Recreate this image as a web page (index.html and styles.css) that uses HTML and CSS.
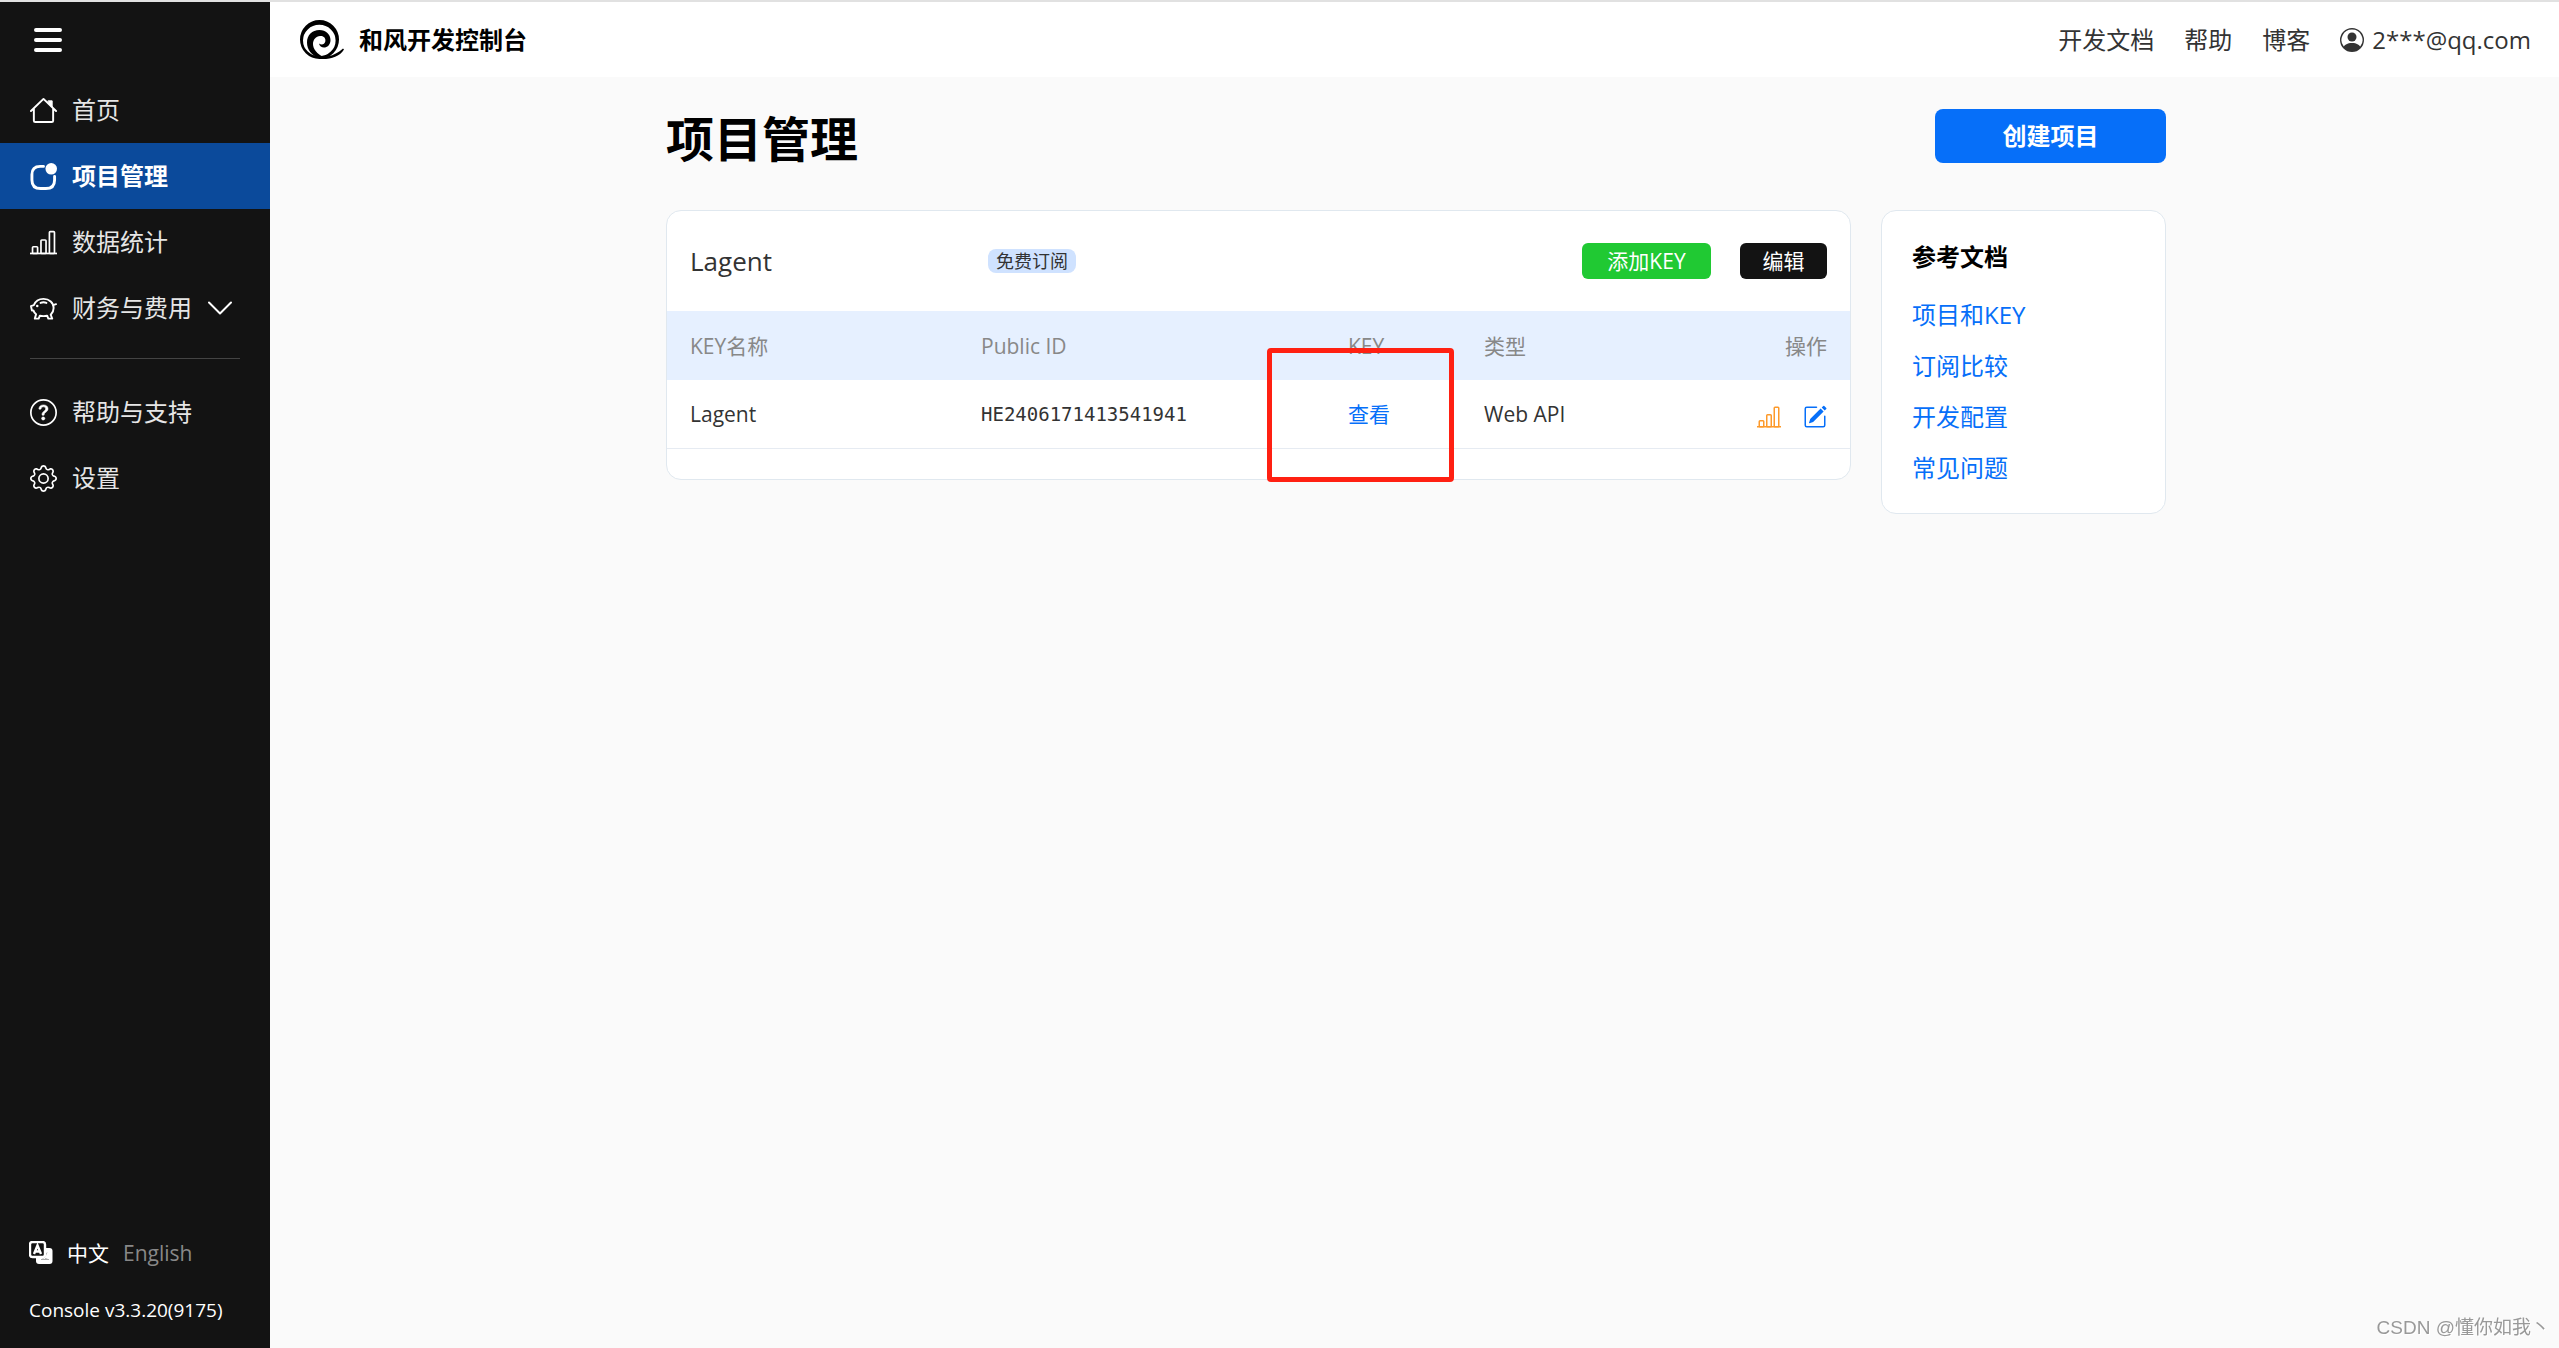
FILE: index.html
```html
<!DOCTYPE html>
<html lang="zh-CN">
<head>
<meta charset="utf-8">
<meta name="viewport" content="width=device-width, initial-scale=1">
<title>项目管理 - 和风开发控制台</title>
<link rel="stylesheet" href="styles.css">
</head>
<body>
<div class="app">
  <aside class="sidebar">
    <button class="menu-toggle" type="button" aria-label="菜单">
      <svg class="menu-icon" viewBox="0 0 28 26" fill="none" stroke="currentColor" stroke-width="4" stroke-linecap="round"><path d="M2 3H26M2 13H26M2 23H26"/></svg>
    </button>
    <nav class="side-nav">
      <a class="nav-item" href="#">
        <svg class="nav-icon" viewBox="0 0 28 28" fill="none" stroke="currentColor" stroke-width="2" stroke-linecap="round" stroke-linejoin="round"><path d="M1 14.500L14 2L27 14.500M4 12V24.500Q4 26 5.500 26H22.500Q24 26 24 24.500V12"/><path d="M19 4H23V10.500L19 6.500Z" fill="currentColor" stroke-width="1"/></svg>
        <span>首页</span>
      </a>
      <a class="nav-item nav-item-active" href="#" aria-current="page">
        <svg class="nav-icon" viewBox="0 0 28 28"><path d="M14 3.500H10.500Q2 3.500 2 12V17.500Q2 26.500 11 26.500H16.500Q25.500 26.500 25.500 17.500V14" fill="none" stroke="currentColor" stroke-width="3" stroke-linecap="round"/><circle cx="22" cy="6" r="6" fill="currentColor"/></svg>
        <span>项目管理</span>
      </a>
      <a class="nav-item" href="#">
        <svg class="nav-icon" viewBox="0 0 16 16" fill="currentColor"><path d="M4 11H2v3h2v-3zm5-4H7v7h2V7zm5-5v12h-2V2h2zm-2-1a1 1 0 0 0-1 1v12a1 1 0 0 0 1 1h2a1 1 0 0 0 1-1V2a1 1 0 0 0-1-1h-2zM6 7a1 1 0 0 1 1-1h2a1 1 0 0 1 1 1v7a1 1 0 0 1-1 1H7a1 1 0 0 1-1-1V7zm-5 4a1 1 0 0 1 1-1h2a1 1 0 0 1 1 1v3a1 1 0 0 1-1 1H2a1 1 0 0 1-1-1v-3z"/><path d="M0 14h16v1H0z"/></svg>
        <span>数据统计</span>
      </a>
      <a class="nav-item" href="#">
        <svg class="nav-icon" viewBox="0 0 28 28" fill="none" stroke="currentColor" stroke-width="2" stroke-linecap="round" stroke-linejoin="round"><path d="M1 11.500L4 10.500C5.500 6.500 9.500 4 14 4C20 4 24.500 8 24.500 13.500C24.500 16.500 23.500 18.500 21.500 20.500L23 24.500H19L17.800 21.500C15.500 22 12.500 22 10.200 21.500L9 24.500H5L6.300 20C5 19 4 17.500 3.500 16H2Z"/><path d="M24 10.500L27 9.500M11 8.200Q14 7 17 8.200"/><circle cx="7.500" cy="11.500" r="1.300" fill="currentColor" stroke="none"/></svg>
        <span>财务与费用</span>
        <svg class="chevron" viewBox="0 0 24 14" fill="none" stroke="currentColor" stroke-width="2" stroke-linecap="round" stroke-linejoin="round"><path d="M1 1.500L12 12.500L23 1.500"/></svg>
      </a>
    </nav>
    <hr class="divider">
    <nav class="side-nav">
      <a class="nav-item" href="#">
        <svg class="nav-icon" viewBox="0 0 16 16" fill="currentColor"><path d="M8 15A7 7 0 1 1 8 1a7 7 0 0 1 0 14zm0 1A8 8 0 1 0 8 0a8 8 0 0 0 0 16z"/><path stroke="currentColor" stroke-width=".3" d="M5.255 5.786a.237.237 0 0 0 .241.247h.825c.138 0 .248-.113.266-.25.090-.656.540-1.134 1.342-1.134.686 0 1.314.343 1.314 1.168 0 .635-.374.927-.965 1.371-.673.489-1.206 1.060-1.168 1.987l.003.217a.25.25 0 0 0 .25.246h.811a.25.25 0 0 0 .25-.25v-.105c0-.718.273-.927 1.010-1.486.609-.463 1.244-.977 1.244-2.056 0-1.511-1.276-2.241-2.673-2.241-1.267 0-2.655.590-2.750 2.286zm1.557 5.763c0 .533.425.927 1.010.927.609 0 1.028-.394 1.028-.927 0-.552-.420-.940-1.029-.940-.584 0-1.009.388-1.009.940z"/></svg>
        <span>帮助与支持</span>
      </a>
      <a class="nav-item" href="#">
        <svg class="nav-icon" viewBox="0 0 16 16" fill="currentColor"><path d="M8 4.754a3.246 3.246 0 1 0 0 6.492 3.246 3.246 0 0 0 0-6.492zM5.754 8a2.246 2.246 0 1 1 4.492 0 2.246 2.246 0 0 1-4.492 0z"/><path d="M9.796 1.343c-.527-1.790-3.065-1.790-3.592 0l-.094.319a.873.873 0 0 1-1.255.520l-.292-.160c-1.640-.892-3.433.902-2.540 2.541l.159.292a.873.873 0 0 1-.520 1.255l-.319.094c-1.790.527-1.790 3.065 0 3.592l.319.094a.873.873 0 0 1 .520 1.255l-.160.292c-.892 1.640.901 3.434 2.541 2.540l.292-.159a.873.873 0 0 1 1.255.520l.094.319c.527 1.790 3.065 1.790 3.592 0l.094-.319a.873.873 0 0 1 1.255-.520l.292.160c1.640.893 3.434-.902 2.540-2.541l-.159-.292a.873.873 0 0 1 .520-1.255l.319-.094c1.790-.527 1.790-3.065 0-3.592l-.319-.094a.873.873 0 0 1-.520-1.255l.160-.292c.893-1.640-.902-3.433-2.541-2.540l-.292.159a.873.873 0 0 1-1.255-.520l-.094-.319zm-2.633.283c.246-.835 1.428-.835 1.674 0l.094.319a1.873 1.873 0 0 0 2.693 1.115l.291-.160c.764-.415 1.600.420 1.184 1.185l-.159.292a1.873 1.873 0 0 0 1.116 2.692l.318.094c.835.246.835 1.428 0 1.674l-.319.094a1.873 1.873 0 0 0-1.115 2.693l.160.291c.415.764-.420 1.600-1.185 1.184l-.291-.159a1.873 1.873 0 0 0-2.693 1.116l-.094.318c-.246.835-1.428.835-1.674 0l-.094-.319a1.873 1.873 0 0 0-2.692-1.115l-.292.160c-.764.415-1.600-.420-1.184-1.185l.159-.291A1.873 1.873 0 0 0 1.945 8.930l-.319-.094c-.835-.246-.835-1.428 0-1.674l.319-.094A1.873 1.873 0 0 0 3.060 4.377l-.160-.292c-.415-.764.420-1.600 1.185-1.184l.292.159a1.873 1.873 0 0 0 2.692-1.115l.094-.319z"/></svg>
        <span>设置</span>
      </a>
    </nav>
    <div class="side-footer">
      <div class="languages">
        <svg class="lang-icon" viewBox="0 0 24 24"><rect x="7" y="7" width="16.500" height="16" rx="3" fill="#fff"/><path d="M12 18.500h8M18 11.500q-1 4-5 7M14 15q2 3 5 3.500" fill="none" stroke="#aaa" stroke-width="1"/><rect x="1" y="1" width="15" height="15" rx="2.500" fill="#131313" stroke="#fff" stroke-width="2.400"/><path d="M5 13L8.500 4.500L12 13M6.500 10.500H10.500" fill="none" stroke="#fff" stroke-width="2.400"/></svg>
        <a class="lang lang-current" href="#">中文</a>
        <a class="lang" href="#">English</a>
      </div>
      <p class="version">Console v3.3.20(9175)</p>
    </div>
  </aside>

  <div class="page">
    <header class="topbar">
      <a class="brand" href="#">
        <svg class="logo" viewBox="0 0 44 40" fill="#000">
          <path fill-rule="evenodd" d="M0 19.500a19.500 19.500 0 1 0 39 0a19.500 19.500 0 1 0-39 0zM3 20.500a16.300 15.700 0 1 0 32.600 0a16.300 15.700 0 1 0-32.600 0z"/>
          <path d="M20 36.500C31 37.500 38 33 43 28.500L44 29.500C39 37 31 39.500 20 39z"/>
          <path d="M18 38C12 35 7 30 7 22.500C7 15 12 10 19.500 10C26 10 30.500 14.500 30.500 20C30.500 25 27 27.500 24 27.500C21.500 27.500 19.500 26 19 23.500C21 25 24.500 25 25.300 21.500C26 18 23.500 15.500 20 16C16 16.500 13 19.500 13 24C13 29 17 34 24 37.500Z"/>
        </svg>
        <span class="brand-name">和风开发控制台</span>
      </a>
      <nav class="top-nav">
        <a class="top-link" href="#">开发文档</a>
        <a class="top-link" href="#">帮助</a>
        <a class="top-link" href="#">博客</a>
        <a class="top-link account" href="#">
          <svg class="account-icon" viewBox="0 0 16 16" fill="currentColor"><path d="M11 6a3 3 0 1 1-6 0 3 3 0 0 1 6 0z"/><path fill-rule="evenodd" d="M0 8a8 8 0 1 1 16 0A8 8 0 0 1 0 8zm8-7a7 7 0 0 0-5.468 11.370C3.242 11.226 4.805 10 8 10s4.757 1.225 5.468 2.370A7 7 0 0 0 8 1z"/></svg>
          <span>2***@qq.com</span>
        </a>
      </nav>
    </header>

    <main class="main">
      <div class="container">
        <div class="page-head">
          <h1 class="page-title">项目管理</h1>
          <button class="btn btn-create" type="button">创建项目</button>
        </div>
        <div class="columns">
          <section class="card project">
            <div class="project-head">
              <h2 class="project-name">Lagent</h2>
              <span class="badge">免费订阅</span>
              <div class="project-actions">
                <button class="btn btn-add" type="button">添加KEY</button>
                <button class="btn btn-edit" type="button">编辑</button>
              </div>
            </div>
            <table class="keys">
              <colgroup><col class="col-name"><col class="col-id"><col class="col-key"><col class="col-type"><col></colgroup>
              <thead>
                <tr><th>KEY名称</th><th>Public ID</th><th>KEY</th><th>类型</th><th class="ops-head">操作</th></tr>
              </thead>
              <tbody>
                <tr>
                  <td>Lagent</td>
                  <td class="mono">HE2406171413541941</td>
                  <td><a class="link" href="#">查看</a></td>
                  <td>Web API</td>
                  <td>
                    <div class="ops">
                      <a class="op op-stats" href="#" aria-label="统计"><svg class="op-icon" viewBox="0 0 16 16" fill="currentColor"><path d="M4 11H2v3h2v-3zm5-4H7v7h2V7zm5-5v12h-2V2h2zm-2-1a1 1 0 0 0-1 1v12a1 1 0 0 0 1 1h2a1 1 0 0 0 1-1V2a1 1 0 0 0-1-1h-2zM6 7a1 1 0 0 1 1-1h2a1 1 0 0 1 1 1v7a1 1 0 0 1-1 1H7a1 1 0 0 1-1-1V7zm-5 4a1 1 0 0 1 1-1h2a1 1 0 0 1 1 1v3a1 1 0 0 1-1 1H2a1 1 0 0 1-1-1v-3z"/><path d="M0 14h16v1H0z"/></svg></a>
                      <a class="op op-edit" href="#" aria-label="编辑"><svg class="op-icon" viewBox="0 0 16 16" fill="currentColor"><path d="M15.502 1.940a.5.5 0 0 1 0 .706L14.459 3.690l-2-2L13.502.646a.5.5 0 0 1 .707 0l1.293 1.293zm-1.750 2.456-2-2L4.939 9.210a.5.5 0 0 0-.121.196l-.805 2.414a.25.25 0 0 0 .316.316l2.414-.805a.5.5 0 0 0 .196-.120l6.813-6.814z"/><path d="M1 13.500A1.500 1.500 0 0 0 2.500 15h11a1.500 1.500 0 0 0 1.500-1.500v-6a.5.5 0 0 0-1 0v6a.5.5 0 0 1-.5.5h-11a.5.5 0 0 1-.5-.5v-11a.5.5 0 0 1 .5-.5H9a.5.5 0 0 0 0-1H2.500A1.500 1.500 0 0 0 1 2.500v11z"/></svg></a>
                    </div>
                  </td>
                </tr>
              </tbody>
            </table>
            <span class="highlight" aria-hidden="true"></span>
          </section>
          <aside class="card docs">
            <h2 class="docs-title">参考文档</h2>
            <a class="doc-link" href="#">项目和KEY</a>
            <a class="doc-link" href="#">订阅比较</a>
            <a class="doc-link" href="#">开发配置</a>
            <a class="doc-link" href="#">常见问题</a>
          </aside>
        </div>
      </div>
    </main>
  </div>
</div>
<div class="watermark">CSDN @懂你如我丶</div>
</body>
</html>
```
FILE: styles.css
```css
* { box-sizing: border-box; }

body {
  margin: 0;
  border-top: 2px solid #e1e1e1;
  background: #fafafa;
  color: #333;
  font-family: "Open Sans", "Noto Sans CJK SC", sans-serif;
  font-size: 21px;
  line-height: 30px;
}

a { color: inherit; text-decoration: none; }
h1, h2, p { margin: 0; }
svg { display: block; flex: none; }
button { font-family: inherit; cursor: pointer; }

.app { display: flex; min-height: calc(100vh - 2px); }

/* Sidebar */
.sidebar {
  display: flex;
  flex-direction: column;
  flex: none;
  width: 270px;
  background: #131313;
  color: #fff;
}
.menu-toggle {
  display: flex;
  align-items: center;
  height: 75px;
  padding: 0 34px;
  border: 0;
  background: none;
  color: #fff;
}
.menu-icon { width: 28px; height: 26px; }
.nav-item {
  display: flex;
  align-items: center;
  height: 66px;
  padding: 0 30px;
  color: #e6e6e6;
  font-size: 24px;
}
.nav-item-active { background: #0b4a9b; color: #fff; font-weight: 700; }
.nav-icon { width: 27px; height: 27px; margin-right: 15px; color: #fff; }
.chevron { width: 24px; height: 14px; margin-left: 16px; color: #fff; }
.divider {
  width: 210px;
  height: 1px;
  margin: 17px 30px 20px;
  border: 0;
  background: #444;
}
.side-footer { margin-top: auto; padding: 0 29px 23px; }
.languages { display: flex; align-items: center; gap: 14px; margin-bottom: 27px; }
.lang-icon { width: 24px; height: 24px; }
.lang { color: #888; }
.lang-current { color: #fff; }
.version { font-size: 19px; }

/* Top bar */
.page { flex: 1; min-width: 0; }
.topbar {
  display: flex;
  align-items: center;
  justify-content: space-between;
  height: 75px;
  padding: 0 28px 0 30px;
  background: #fff;
}
.brand { display: flex; align-items: center; gap: 15px; color: #000; }
.logo { width: 44px; height: 40px; }
.brand-name { font-size: 24px; font-weight: 700; }
.top-nav { display: flex; gap: 30px; font-size: 24px; }
.account { display: flex; align-items: center; gap: 8px; }
.account-icon { width: 24px; height: 24px; }

/* Content */
.main { padding: 32px 24px 32px 27px; }
.container { max-width: 1500px; margin: 0 auto; }
.page-head {
  display: flex;
  align-items: flex-start;
  justify-content: space-between;
  margin-bottom: 41px;
}
.page-title { color: #000; font-size: 48px; line-height: 60px; }
.btn {
  padding: 0;
  border: 0;
  border-radius: 6px;
  color: #fff;
  font-size: 21px;
  line-height: 30px;
}
.btn-create {
  width: 231px;
  height: 54px;
  border-radius: 8px;
  background: #066ff9;
  font-size: 24px;
  font-weight: 700;
}
.btn-add { width: 129px; height: 36px; background: #20c933; }
.btn-edit { width: 87px; height: 36px; background: #131313; }

.columns { display: flex; align-items: flex-start; gap: 30px; }
.card { border: 1px solid #e0e8ef; border-radius: 15px; background: #fff; }
.project { position: relative; flex: 1; padding-bottom: 30px; }
.project-head { display: flex; align-items: center; height: 100px; padding: 0 23px; }
.project-name { width: 298px; color: #333; font-size: 26px; font-weight: 500; }
.badge {
  padding: 0 8px;
  border-radius: 8px;
  background: #cfe2ff;
  font-size: 18px;
  line-height: 24px;
}
.project-actions { display: flex; gap: 29px; margin-left: auto; }

.keys { width: 100%; border-spacing: 0; table-layout: fixed; }
.col-name { width: 291px; }
.col-id { width: 367px; }
.col-key { width: 136px; }
.col-type { width: 195px; }
.keys th, .keys td { height: 69px; padding: 0 23px; text-align: left; white-space: nowrap; }
.keys th { background: #e6f0ff; color: #888; font-weight: 400; }
.keys td { border-bottom: 1px solid #e6ebf2; }
.keys .ops-head { text-align: right; }
.keys .mono { font-family: "DejaVu Sans Mono", monospace; font-size: 19px; }
.link, .doc-link { color: #066ff9; }
.ops { display: flex; justify-content: flex-end; gap: 22px; padding-top: 5px; }
.op-icon { width: 24px; height: 24px; }
.op-stats { color: #fd9a2b; }
.op-edit { color: #066ff9; }

.highlight {
  position: absolute;
  top: 137px;
  left: 600px;
  width: 187px;
  height: 134px;
  border: 5px solid #ff2012;
  border-radius: 4px;
  pointer-events: none;
}

.docs {
  display: flex;
  flex-direction: column;
  gap: 21px;
  width: 285px;
  padding: 31px 30px 30px;
  font-size: 24px;
}
.docs-title { margin-bottom: 7px; color: #000; font-size: 24px; font-weight: 700; }

.watermark {
  position: fixed;
  right: 9px;
  bottom: 5px;
  color: #999;
  font-family: "Liberation Sans", "Noto Sans CJK SC", sans-serif;
  font-size: 19px;
  text-shadow: 1px 1px 0 #fff;
}
```
